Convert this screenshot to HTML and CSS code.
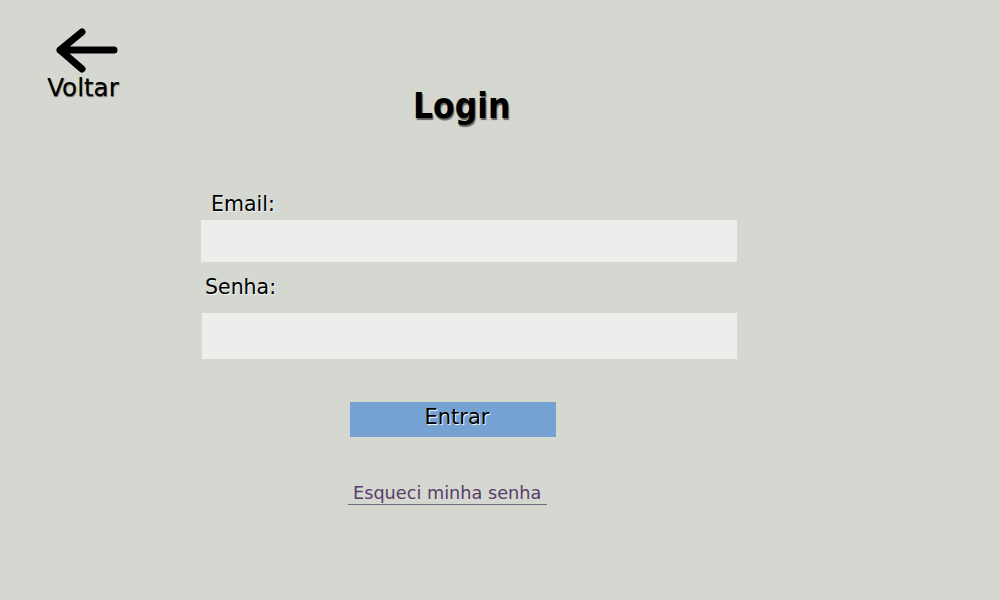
FILE: index.html
```html
<!DOCTYPE html>
<html lang="pt-BR">
<head>
<meta charset="utf-8">
<title>Login</title>
<link rel="stylesheet" href="styles.css">
</head>
<body>
<div class="page">
  <header class="top">
    <a class="back" href="#">
      <svg class="back-icon" width="64" height="48" viewBox="0 0 64 48" aria-hidden="true">
        <path d="M4 22 H58 M4 22 L26 4 M4 22 L26 41" fill="none" stroke="#000" stroke-width="7" stroke-linecap="round" stroke-linejoin="round"/>
      </svg>
      <span class="back-text">Voltar</span>
    </a>
    <h1 class="title">Login</h1>
  </header>
  <form class="form">
    <label class="label label-email" for="email">Email:</label>
    <input class="field field-email" id="email" type="email">
    <label class="label label-senha" for="senha">Senha:</label>
    <input class="field field-senha" id="senha" type="password">
    <button class="btn" type="button">Entrar</button>
    <a class="forgot" href="#">Esqueci minha senha</a>
  </form>
</div>
</body>
</html>
```
FILE: styles.css
```css
html, body {
  margin: 0;
  padding: 0;
}
body {
  background: #d5d8d1;
  font-family: "DejaVu Sans", sans-serif;
  color: #000;
  height: 600px;
  overflow: hidden;
}
.page {
  padding-top: 28px;
}
.top {
  display: flex;
  align-items: flex-start;
}
.back {
  margin-left: 46px;
  display: flex;
  flex-direction: column;
  align-items: center;
  text-decoration: none;
  color: #000;
  width: 74px;
}
.back-icon {
  display: block;
  margin-left: 9px;
}
.back-text {
  font-size: 24.6px;
  line-height: 24px;
  margin-top: 0;
  text-shadow: 0.5px 0.5px 1px rgba(0, 0, 0, 0.6);
}
.title {
  margin: 58px 0 0 293px;
  font-family: "DejaVu Sans Condensed", "DejaVu Sans", sans-serif;
  font-stretch: condensed;
  font-weight: bold;
  font-size: 35px;
  line-height: 40px;
  text-shadow: 1px 2px 1px rgba(0, 0, 0, 0.55);
}
.form {
  margin-left: 201px;
  width: 536px;
  display: flex;
  flex-direction: column;
  align-items: flex-start;
  padding-top: 66px;
}
.label {
  font-size: 20.5px;
  line-height: 24px;
  text-shadow: 1px 1px 1px rgba(255, 255, 255, 0.8);
}
.label-email {
  margin-left: 10px;
}
.label-senha {
  margin: 13px 0 0 4px;
}
.field {
  box-sizing: border-box;
  border: none;
  background: #edeeec;
  outline: none;
  margin: 0;
  padding: 0 8px;
  font: inherit;
}
.field-email {
  width: 536px;
  height: 42px;
  margin-top: 4px;
}
.field-senha {
  width: 535px;
  height: 46px;
  margin: 14px 0 0 1px;
}
.btn {
  margin: 43px 0 0 149px;
  width: 206px;
  height: 35px;
  background: #76a2d3;
  border: none;
  padding: 0 0 5px 8px;
  font-family: "DejaVu Sans", sans-serif;
  font-size: 21px;
  color: #000;
  text-shadow: 1px 1px 1px #fff;
}
.forgot {
  margin: 46px 0 0 147px;
  padding: 0 6px 0 5px;
  font-size: 17.7px;
  line-height: 21px;
  color: #5a3c6a;
  text-decoration: none;
  border-bottom: 1px solid #75687c;
}
```
